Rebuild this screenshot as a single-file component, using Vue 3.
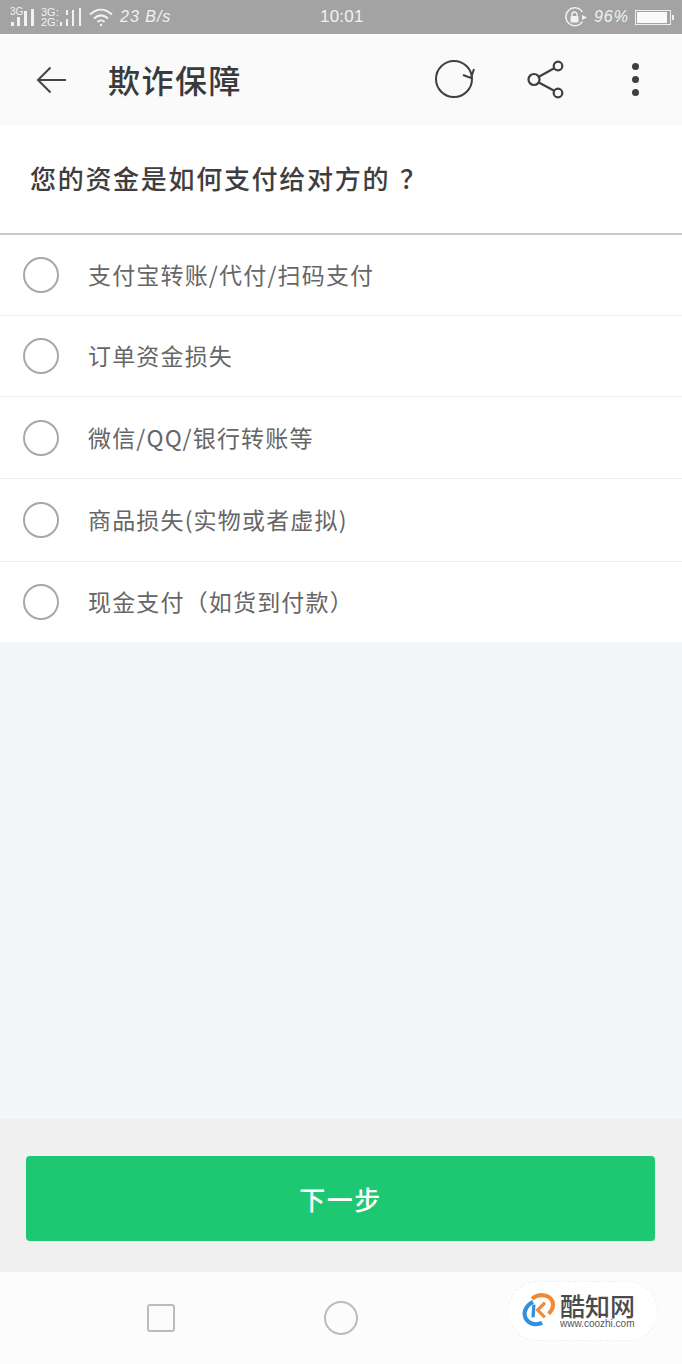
<script setup>
const options = [
  "支付宝转账/代付/扫码支付",
  "订单资金损失",
  "微信/QQ/银行转账等",
  "商品损失(实物或者虚拟)",
  "现金支付（如货到付款）",
];
</script>

<template>
  <div class="page">
    <div class="status-bar">
      <div class="status-left">
        <svg class="signal" width="72" height="22" viewBox="0 0 72 22">
          <text x="0" y="9" class="tiny">3G</text>
          <text x="31" y="10" class="small">3G:</text>
          <text x="31" y="20" class="small">2G:</text>
          <g fill="#f2f2f2">
            <rect x="1" y="16" width="3" height="4" />
            <rect x="7" y="11" width="3" height="9" />
            <rect x="14" y="5" width="3" height="15" />
            <rect x="21" y="3" width="3" height="17" />
            <rect x="50" y="16" width="2" height="4" />
            <rect x="56" y="4" width="2" height="5" />
            <rect x="56" y="13" width="2" height="7" />
            <rect x="62" y="4" width="2" height="16" />
            <rect x="69" y="2" width="2" height="18" />
          </g>
        </svg>
        <svg width="26" height="20" viewBox="0 0 26 20" fill="none" stroke="#f2f2f2" stroke-width="2">
          <path d="M2 7.500C9 1 17 1 24 7.500" />
          <path d="M6 11.500C10.500 7.500 15.500 7.500 20 11.500" />
          <path d="M9.500 15C11.500 13 14.500 13 16.500 15" />
          <circle cx="13" cy="18" r="1.200" fill="#f2f2f2" stroke="none" />
        </svg>
        <span class="net-speed">23 B/s</span>
      </div>
      <span class="clock">10:01</span>
      <div class="status-right">
        <svg width="24" height="20" viewBox="0 0 24 20" fill="none">
          <path d="M18.500 14.500A9 9 0 1 1 18.500 5" stroke="#f2f2f2" stroke-width="1.400" />
          <path d="M18 8l5 2.500-5 2.500z" fill="#f2f2f2" />
          <rect x="6.500" y="9" width="8" height="6.500" rx="1" fill="#f2f2f2" />
          <path d="M8 9V7.500a2.500 2.500 0 0 1 5 0V9" stroke="#f2f2f2" stroke-width="1.300" />
        </svg>
        <span class="battery-text">96%</span>
        <div class="battery"><div class="battery-fill"></div></div>
      </div>
    </div>

    <header class="app-bar">
      <svg class="back" width="32" height="28" viewBox="0 0 32 28" fill="none" stroke="#444" stroke-width="2">
        <path d="M30 14H2.500M14.500 1.500 2 14l12.500 12.500" />
      </svg>
      <h1 class="title">欺诈保障</h1>
      <svg class="refresh" width="42" height="42" viewBox="0 0 42 42" fill="none" stroke="#3f3f3f" stroke-width="2">
        <circle cx="20" cy="20" r="18" />
        <path d="M40 10 37 19 29 16" />
      </svg>
      <svg class="share" width="38" height="40" viewBox="0 0 38 40" fill="none" stroke="#3f3f3f" stroke-width="2.200">
        <circle cx="7" cy="19.500" r="5.500" />
        <circle cx="31" cy="6" r="4.300" />
        <circle cx="31" cy="33" r="4.300" />
        <path d="M11.800 16.800 27.200 8.200M11.800 22.500 27.200 30.800" />
      </svg>
      <div class="more">
        <i></i>
        <i></i>
        <i></i>
      </div>
    </header>

    <main class="content">
      <div class="question">您的资金是如何支付给对方的<span class="question-mark">？</span></div>
      <ul class="options">
        <li v-for="option in options" :key="option" class="option">
          <span class="radio"></span>
          <span class="option-text">{{ option }}</span>
        </li>
      </ul>
    </main>

    <div class="footer">
      <button class="next">下一步</button>
    </div>

    <nav class="nav-bar">
      <span class="nav-square"></span>
      <span class="nav-circle"></span>
      <span class="nav-slot"></span>
      <div class="watermark">
        <svg width="33" height="36" viewBox="0 0 36 38" fill="none">
          <path d="M12 9C4 13 1 21 4 27c3 6 11 8 18 5" stroke="#2f8fe0" stroke-width="4.500" />
          <path d="M11 6C17 0 29 0 33 8c2 5 0 10-4 14" stroke="#f08a35" stroke-width="4.500" />
          <path d="M13 12 12 26" stroke="#2f8fe0" stroke-width="3.500" />
          <path d="M25 10 17 18l8 8" stroke="#f08a35" stroke-width="3.500" />
        </svg>
        <div class="mark-text">
          <span class="mark-name">酷知网</span>
          <span class="mark-url">www.coozhi.com</span>
        </div>
      </div>
    </nav>
  </div>
</template>

<style>
html,
body {
  margin: 0;
  background: #f4f5f7;
}
</style>

<style scoped>
.page {
  width: 682px;
  height: 1364px;
  display: flex;
  flex-direction: column;
  overflow: hidden;
  font-family: "Noto Sans CJK SC", "Noto Sans", sans-serif;
  background: #f4f5f7;
}

.status-bar {
  height: 34px;
  flex: none;
  display: flex;
  align-items: center;
  justify-content: space-between;
  position: relative;
  padding: 0 11px 0 10px;
  box-sizing: border-box;
  background: #a3a3a3;
  color: #f2f2f2;
}

.status-left,
.status-right {
  display: flex;
  align-items: center;
}

.status-left {
  gap: 6px;
}

.status-right {
  gap: 6px;
}

.tiny {
  font: 10px "Liberation Sans", sans-serif;
  fill: #f2f2f2;
}

.small {
  font: 11px "Liberation Sans", sans-serif;
  fill: #f2f2f2;
}

.net-speed,
.battery-text,
.clock {
  font-family: "Liberation Sans", sans-serif;
  font-style: italic;
  font-size: 16px;
  letter-spacing: 1px;
}

.clock {
  position: absolute;
  left: 320px;
  font-style: normal;
  font-size: 17px;
  letter-spacing: 0.200px;
}

.battery {
  width: 36px;
  height: 15px;
  border: 1px solid #eee;
  padding: 1px;
  box-sizing: border-box;
  position: relative;
}

.battery::after {
  content: "";
  position: absolute;
  right: -4px;
  top: 4px;
  width: 2px;
  height: 5px;
  background: #eee;
}

.battery-fill {
  height: 100%;
  width: 95%;
  background: #fafafa;
}

.app-bar {
  height: 91px;
  flex: none;
  display: flex;
  align-items: center;
  background: #fafafa;
}

.back {
  margin-left: 36px;
}

.title {
  margin: 0 0 2px 40px;
  flex: 1;
  font-size: 32px;
  font-weight: 500;
  letter-spacing: 1.500px;
  color: #3a3a3a;
}

.refresh {
  margin-right: 51px;
}

.share {
  margin-right: 67px;
}

.more {
  width: 8px;
  margin-right: 42px;
  display: flex;
  flex-direction: column;
  gap: 6px;
}

.more i {
  display: block;
  width: 7px;
  height: 7px;
  border-radius: 50%;
  background: #3f3f3f;
}

.content {
  flex: 1;
}

.question {
  height: 110px;
  box-sizing: border-box;
  padding: 0 0 4px 30px;
  display: flex;
  align-items: center;
  background: #fff;
  border-bottom: 2px solid #c8c8c8;
  font-size: 26px;
  font-weight: 500;
  letter-spacing: 1.700px;
  color: #3e3e3e;
}

.question-mark {
  margin-left: 10px;
}

.options {
  list-style: none;
  margin: 0;
  padding: 0;
  background: #fff;
}

.option {
  height: 81px;
  box-sizing: border-box;
  display: flex;
  align-items: center;
  padding-left: 23px;
  border-bottom: 1px solid #ececec;
}

.option:nth-child(3) {
  height: 82px;
}

.option:nth-child(4) {
  height: 83px;
}

.option:last-child {
  height: 80px;
  border-bottom: 0;
}

.radio {
  width: 36px;
  height: 36px;
  box-sizing: border-box;
  border: 2px solid #a8a8a8;
  border-radius: 50%;
}

.option-text {
  margin: 0 0 2px 29px;
  font-size: 23px;
  letter-spacing: 1.170px;
  color: #666;
}

.footer {
  height: 153px;
  flex: none;
  box-sizing: border-box;
  padding: 37px 27px 31px 26px;
  background: #f0f0f0;
}

.next {
  display: block;
  width: 100%;
  height: 85px;
  padding: 0;
  border: 0;
  border-radius: 4px;
  background: #1ec873;
  color: #fff;
  font-family: inherit;
  font-size: 26px;
  font-weight: 500;
  letter-spacing: 1.500px;
}

.nav-bar {
  height: 92px;
  flex: none;
  position: relative;
  display: grid;
  grid-template-columns: 180px 180px 180px;
  justify-content: center;
  justify-items: center;
  align-items: center;
  background: #fcfcfc;
}

.nav-square {
  width: 28px;
  height: 28px;
  box-sizing: border-box;
  border: 2px solid #bcbcbc;
  border-radius: 3px;
}

.nav-circle {
  width: 34px;
  height: 34px;
  box-sizing: border-box;
  border: 2px solid #bcbcbc;
  border-radius: 50%;
}

.watermark {
  position: absolute;
  left: 508px;
  top: 9px;
  width: 150px;
  height: 60px;
  box-sizing: border-box;
  padding-left: 13px;
  display: flex;
  align-items: center;
  gap: 5px;
  background: #fff;
  border: 1px dashed #f0f0f0;
  border-radius: 30px;
}

.mark-text {
  display: flex;
  flex-direction: column;
  line-height: 1;
}

.mark-name {
  font-size: 25px;
  font-weight: 500;
  color: #4b4b4b;
  line-height: 24px;
}

.mark-url {
  font-family: "Liberation Sans", sans-serif;
  font-size: 10px;
  color: #555;
  margin-top: 2px;
}
</style>
